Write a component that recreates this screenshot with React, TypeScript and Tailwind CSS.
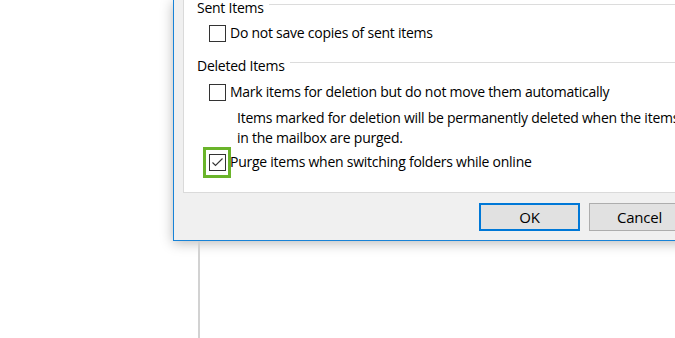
import type { ReactNode } from "react";

function Checkbox({ checked = false }: { checked?: boolean }) {
  return (
    <span className="w-[17px] h-[17px] shrink-0 border border-[#333333] bg-white flex items-center justify-center">
      {checked && (
        <svg width="15" height="15" viewBox="0 0 15 15" fill="none">
          <path d="M2.5 7.5 L5.5 10.5 L12.5 3.5" stroke="#333333" strokeWidth="1.1" />
        </svg>
      )}
    </span>
  );
}

function GroupHeader({ label, className = "" }: { label: string; className?: string }) {
  return (
    <div className={`flex items-start h-[20px] ${className}`}>
      <span className="leading-[20px] whitespace-nowrap">{label}</span>
      <span className="flex-1 h-px mt-[6px] ml-[5px] bg-[#dcdcdc]" />
    </div>
  );
}

function CheckRow({
  children,
  checked,
  highlight,
  className = "",
}: {
  children: ReactNode;
  checked?: boolean;
  highlight?: boolean;
  className?: string;
}) {
  return (
    <div className={`flex items-center h-[20px] pl-[12px] ${className}`}>
      <span className="relative flex">
        <Checkbox checked={checked} />
        {highlight && (
          <span className="absolute left-[-6px] top-[-7px] w-[28px] h-[31px] border-[3px] border-[#6ab42a]" />
        )}
      </span>
      <span className="ml-[4px] leading-[20px] whitespace-nowrap">{children}</span>
    </div>
  );
}

export default function App() {
  return (
    <div className="w-[675px] h-[338px] bg-white overflow-hidden flex flex-col text-[14px] tracking-[-0.25px] text-black font-['Open_Sans','Noto_Sans',sans-serif]">
      {/* Dialog window */}
      <div className="ml-[173px] w-[560px] h-[241px] shrink-0 bg-[#f0f0f0] border-l border-b border-[#1883d7] shadow-[0_2px_12px_rgba(0,0,0,0.28)] flex flex-col">
        {/* White options panel */}
        <div className="ml-[9px] h-[193px] shrink-0 bg-white border-l border-b border-[#dadada] pl-[13px] flex flex-col">
          <GroupHeader label="Sent Items" className="-mt-[2px]" />
          <CheckRow className="mt-[5px]">Do not save copies of sent items</CheckRow>

          <GroupHeader label="Deleted Items" className="mt-[13px]" />
          <CheckRow className="mt-[6px]">
            Mark items for deletion but do not move them automatically
          </CheckRow>
          <div className="mt-[6px] pl-[40px] leading-[20px] whitespace-nowrap">
            <div>Items marked for deletion will be permanently deleted when the items</div>
            <div>in the mailbox are purged.</div>
          </div>
          <CheckRow className="mt-[4px]" checked highlight>
            Purge items when switching folders while online
          </CheckRow>
        </div>

        {/* Buttons */}
        <div className="flex gap-[9px] pl-[305px] pt-[10px]">
          <button className="w-[101px] h-[28px] bg-[#e1e1e1] border-2 border-[#0078d7] text-[15px] leading-none">
            OK
          </button>
          <button className="w-[101px] h-[28px] bg-[#e1e1e1] border border-[#adadad] text-[15px] leading-none">
            Cancel
          </button>
        </div>
      </div>

      {/* Background pane divider */}
      <div className="ml-[198px] w-[2px] flex-1 bg-[#d2d2d2]" />
    </div>
  );
}
